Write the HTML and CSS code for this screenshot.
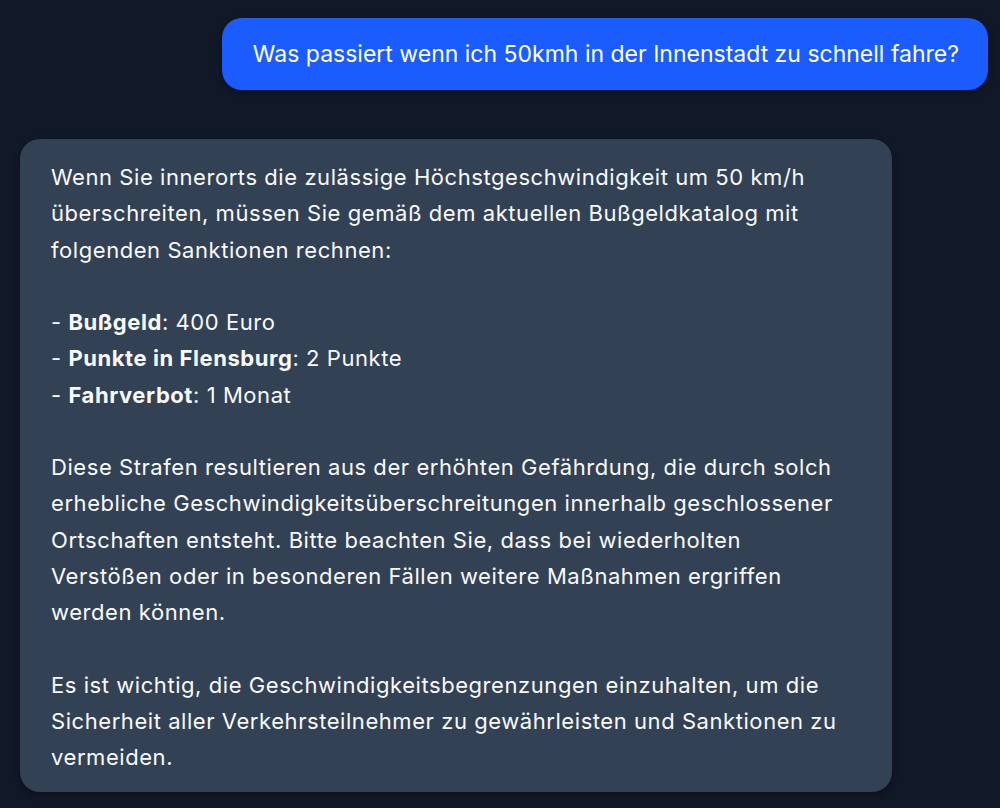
FILE: index.html
```html
<!DOCTYPE html>
<html lang="de">
<head>
<meta charset="utf-8">
<title>Chat</title>
<link rel="stylesheet" href="styles.css">
</head>
<body>
<main class="chat">
  <div class="row row-user">
    <div class="bubble bubble-user">Was passiert wenn ich 50kmh in der Innenstadt zu schnell fahre?</div>
  </div>
  <div class="row row-bot">
    <div class="bubble bubble-bot">
      <p>Wenn Sie innerorts die zulässige Höchstgeschwindigkeit um 50 km/h<br>überschreiten, müssen Sie gemäß dem aktuellen Bußgeldkatalog mit<br>folgenden Sanktionen rechnen:</p>
      <p>- <b>Bußgeld</b>: 400 Euro<br>- <b>Punkte in Flensburg</b>: 2 Punkte<br>- <b>Fahrverbot</b>: 1 Monat</p>
      <p>Diese Strafen resultieren aus der erhöhten Gefährdung, die durch solch<br>erhebliche Geschwindigkeitsüberschreitungen innerhalb geschlossener<br>Ortschaften entsteht. Bitte beachten Sie, dass bei wiederholten<br>Verstößen oder in besonderen Fällen weitere Maßnahmen ergriffen<br>werden können.</p>
      <p>Es ist wichtig, die Geschwindigkeitsbegrenzungen einzuhalten, um die<br>Sicherheit aller Verkehrsteilnehmer zu gewährleisten und Sanktionen zu<br>vermeiden.</p>
    </div>
  </div>
</main>
</body>
</html>
```
FILE: styles.css
```css
html, body {
  margin: 0;
  padding: 0;
  background: #111827;
  height: 100%;
}
body {
  font-family: Inter, "Noto Sans", "Liberation Sans", sans-serif;
  color: #ffffff;
}
.chat {
  display: flex;
  flex-direction: column;
  gap: 49px;
  padding: 18px 12px 0 20px;
}
.row {
  display: flex;
}
.row-user {
  justify-content: flex-end;
}
.row-bot {
  justify-content: flex-start;
}
.bubble {
  border-radius: 20px;
  box-shadow: 0 2px 6px rgba(0, 0, 0, 0.35);
}
.bubble-user {
  background: #1a5cff;
  color: #ffffff;
  font-size: 23px;
  padding: 0 29px 0 31px;
  height: 72px;
  display: flex;
  align-items: center;
}
.bubble-bot {
  background: #334155;
  color: #f8fafc;
  font-size: 22px;
  letter-spacing: 0.56px;
  width: 872px;
  box-sizing: border-box;
  padding: 20px 20px 17px 31px;
  line-height: 36.25px;
}
.bubble-bot p {
  margin: 0 0 36.25px 0;
  white-space: nowrap;
}
.bubble-bot p:last-child {
  margin-bottom: 0;
}
.bubble-bot b {
  font-weight: 700;
}
```
